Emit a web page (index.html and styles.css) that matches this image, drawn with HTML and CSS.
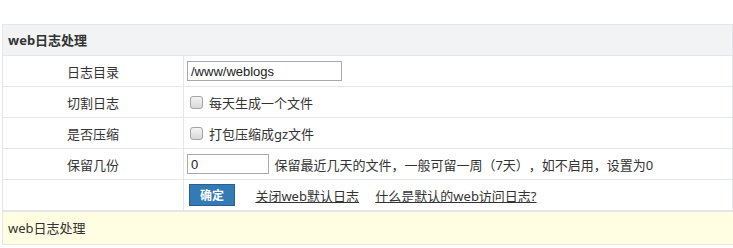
FILE: index.html
```html
<!DOCTYPE html>
<html lang="zh-CN">
<head>
  <meta charset="UTF-8" />
  <title>web日志处理</title>
  <link rel="stylesheet" href="styles.css">
</head>
<body>
  <table class="form-table">
    <tr class="head">
      <th colspan="2">web日志处理</th>
    </tr>
    <tr>
      <td class="label">日志目录</td>
      <td><input class="text-input wide" type="text" value="/www/weblogs"></td>
    </tr>
    <tr>
      <td class="label">切割日志</td>
      <td><label class="check"><input type="checkbox"> 每天生成一个文件</label></td>
    </tr>
    <tr>
      <td class="label">是否压缩</td>
      <td><label class="check"><input type="checkbox"> 打包压缩成gz文件</label></td>
    </tr>
    <tr>
      <td class="label">保留几份</td>
      <td><input class="text-input short" type="text" value="0"> <span class="hint">保留最近几天的文件，一般可留一周（7天），如不启用，设置为0</span></td>
    </tr>
    <tr class="actions">
      <td class="label"></td>
      <td>
        <button class="btn">确定</button>
        <a href="#" class="link">关闭web默认日志</a>
        <a href="#" class="link">什么是默认的web访问日志?</a>
      </td>
    </tr>
  </table>
  <div class="notice">web日志处理</div>
</body>
</html>
```

FILE: styles.css
```css
body {
  margin: 24px 0 0 2px;
  font-family: "Noto Sans", "Noto Sans CJK SC", sans-serif;
  font-size: 13px;
  color: #333;
  background: #fff;
  text-spacing-trim: space-all;
}
.form-table {
  width: 731px;
  border-collapse: collapse;
  border: 1px solid #e4e6ea;
}
.form-table th,
.form-table td {
  border: 1px solid #e4e6ea;
  height: 30px;
  padding: 0 3px;
  text-align: left;
  vertical-align: middle;
}
.form-table .head th {
  background: #f2f3f5;
  font-weight: bold;
  padding-left: 5px;
  padding-bottom: 2px;
  height: 28px;
}
.form-table td.label {
  width: 174px;
  text-align: center;
}
.actions td {
  border-bottom: 2px solid #e4e6ea;
}
.text-input {
  height: 20px;
  box-sizing: border-box;
  border: 1px solid #a9a9a9;
  padding: 0 3px;
  font-family: "Liberation Sans", Arial, sans-serif;
  font-size: 13px;
  color: #222;
  vertical-align: middle;
}
.wide {
  width: 155px;
}
.short {
  width: 82px;
}
.hint {
  margin-left: 2px;
  vertical-align: middle;
}
.check {
  display: flex;
  align-items: center;
}
.check input {
  appearance: none;
  width: 13px;
  height: 13px;
  margin: 0 6px 0 3px;
  border: 1px solid #a4a4a4;
  border-radius: 3px;
  background: linear-gradient(#f4f4f4, #d8d8d8);
}
.btn {
  background: #337ab7;
  border: 1px solid #2b5f8f;
  color: #fff;
  font-family: inherit;
  font-size: 12px;
  font-weight: bold;
  width: 46px;
  height: 22px;
  padding: 0;
  margin-left: 2px;
  margin-right: 17px;
  vertical-align: middle;
}
.link {
  color: #333;
  text-decoration: underline;
  margin-right: 13px;
  vertical-align: middle;
}
.notice {
  width: 726px;
  height: 32px;
  line-height: 33px;
  background: #fffde2;
  border: 1px solid #e8e8e0;
  border-top: none;
  padding-left: 5px;
  box-sizing: content-box;
}
```
